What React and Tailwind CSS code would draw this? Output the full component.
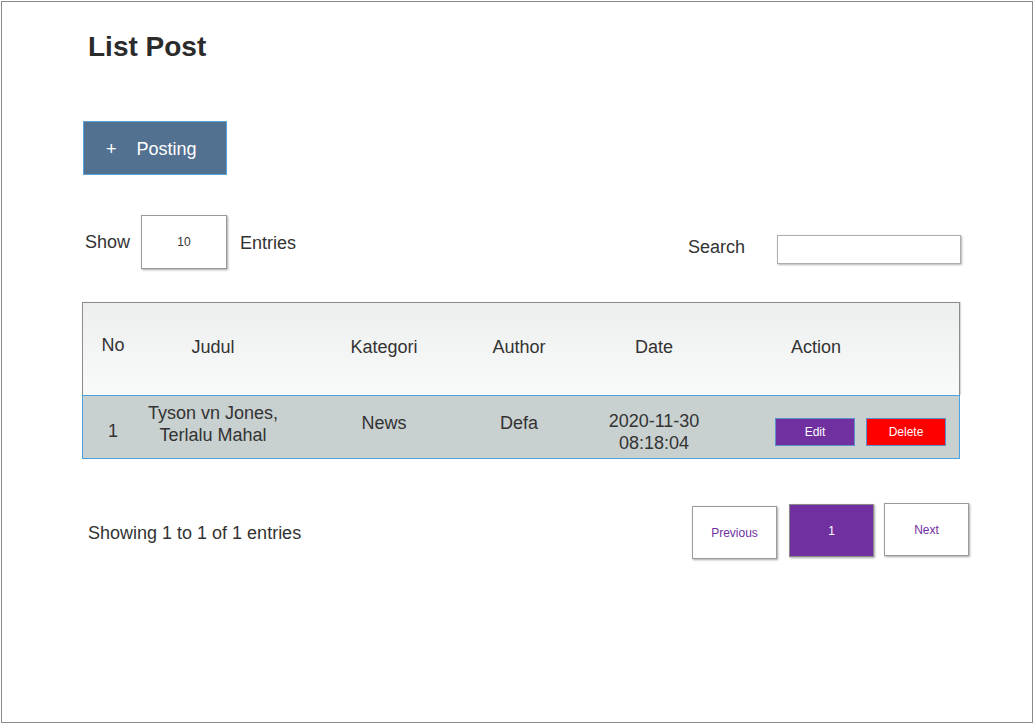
import React from 'react';

const COLS = 'grid grid-cols-[60px_140px_202px_68px_202px_1fr]';

const posts = [
  {
    no: 1,
    judul: ['Tyson vn Jones,', 'Terlalu Mahal'],
    kategori: 'News',
    author: 'Defa',
    date: ['2020-11-30', '08:18:04'],
  },
];

const App = () => {
  return (
    <div className="min-h-screen bg-white font-['Liberation_Sans',Arial,sans-serif] text-[#333]">
      <div className="ml-[1px] mt-[1px] w-[1032px] h-[722px] border border-[#8a8a8a] bg-white pl-[80px] pt-[29px]">
        {/* Title */}
        <h1 className="ml-[6px] text-[28px] leading-[32px] font-bold text-[#2b2b2b]">List Post</h1>

        {/* Posting button */}
        <button className="mt-[58px] ml-[1px] w-[144px] h-[54px] flex items-center pl-[22px] pt-[2px] gap-[20px] bg-[#52708f] border border-[#5aa2dc] text-white text-[18px]">
          <span>+</span>
          <span>Posting</span>
        </button>

        {/* Show / Search */}
        <div className="mt-[40px] w-[879px] flex items-start justify-between">
          <div className="flex items-center">
            <span className="ml-[3px] text-[18px]">Show</span>
            <div className="ml-[11px] w-[86px] h-[54px] flex items-center justify-center border border-[#9a9a9a] bg-white shadow-[1px_1px_2px_rgba(0,0,0,0.35)] text-[12px]">
              10
            </div>
            <span className="ml-[13px] mt-[3px] text-[18px]">Entries</span>
          </div>
          <div className="mt-[20px] flex items-center">
            <span className="text-[18px] -mt-[4px]">Search</span>
            <div className="ml-[32px] w-[184px] h-[29px] border border-[#adadad] bg-white shadow-[1px_1px_2px_rgba(0,0,0,0.3)]" />
          </div>
        </div>

        {/* Table */}
        <div className="mt-[33px] w-[878px] text-[18px]">
          <div className={`${COLS} h-[93px] items-center pb-[4px] border-t border-l border-r border-[#8c8c8c] bg-gradient-to-b from-[#edefef] to-[#f9fafa] shadow-[1px_0_1px_rgba(0,0,0,0.15)]`}>
            <span className="text-center -mt-[4px]">No</span>
            <span className="text-center">Judul</span>
            <span className="text-center">Kategori</span>
            <span className="text-center">Author</span>
            <span className="text-center">Date</span>
            <span className="pl-[36px]">Action</span>
          </div>
          {posts.map((p) => (
            <div key={p.no} className={`${COLS} h-[64px] items-center border border-[#4aa3df] bg-[#c8d0d0]`}>
              <span className="text-center mt-[8px]">{p.no}</span>
              <span className="text-center leading-[22px] -mt-[6px]">
                {p.judul[0]}
                <br />
                {p.judul[1]}
              </span>
              <span className="text-center -mt-[7px]">{p.kategori}</span>
              <span className="text-center -mt-[7px]">{p.author}</span>
              <span className="text-center leading-[22px] mt-[9px]">
                {p.date[0]}
                <br />
                {p.date[1]}
              </span>
              <div className="flex items-center gap-[11px] pl-[20px] mt-[10px]">
                <button className="w-[80px] h-[28px] bg-[#7030a0] border border-[#5b8fd0] text-white text-[12px]">Edit</button>
                <button className="w-[80px] h-[28px] bg-[#ff0000] border border-[#5b8fd0] text-white text-[12px]">Delete</button>
              </div>
            </div>
          ))}
        </div>

        {/* Footer */}
        <div className="mt-[44px] w-[887px] flex items-start justify-between">
          <span className="ml-[6px] mt-[17px] text-[18px]">Showing 1 to 1 of 1 entries</span>
          <div className="flex items-start">
            <button className="mt-[3px] w-[85px] h-[53px] border border-[#9a9a9a] bg-white shadow-[1px_1px_2px_rgba(0,0,0,0.35)] text-[12px] text-[#7030a0]">
              Previous
            </button>
            <button className="ml-[12px] mt-[1px] w-[85px] h-[53px] border border-[#8a8a8a] bg-[#7030a0] shadow-[1px_1px_2px_rgba(0,0,0,0.35)] text-[12px] text-white">
              1
            </button>
            <button className="ml-[10px] w-[85px] h-[53px] border border-[#9a9a9a] bg-white shadow-[1px_1px_2px_rgba(0,0,0,0.35)] text-[12px] text-[#7030a0]">
              Next
            </button>
          </div>
        </div>
      </div>
    </div>
  );
};

export default App;
